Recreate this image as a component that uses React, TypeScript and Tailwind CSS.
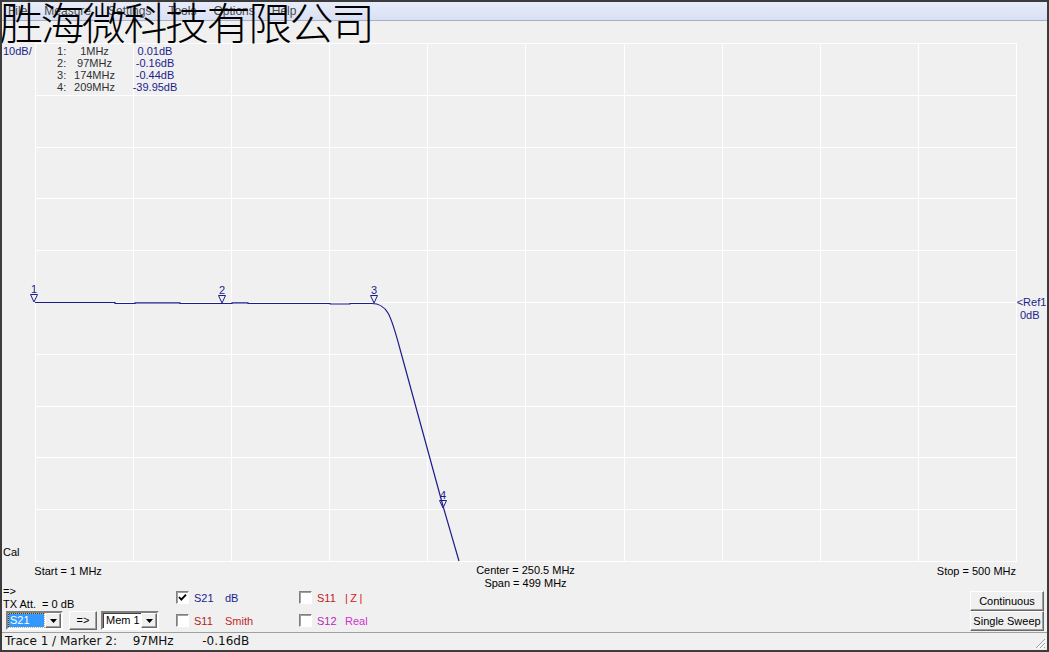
import React from "react";

const navy = "#1d1d8c";
const vLines = [35, 133, 231, 329, 427, 525, 624, 722, 820, 918, 1016];
const hLines = [43, 95, 147, 198, 250, 302, 354, 406, 457, 509, 561];

const markers = [
  { n: "1", x: 34, y: 302, f: "1MHz", v: "0.01dB" },
  { n: "2", x: 222, y: 303, f: "97MHz", v: "-0.16dB" },
  { n: "3", x: 374, y: 303, f: "174MHz", v: "-0.44dB" },
  { n: "4", x: 443, y: 508, f: "209MHz", v: "-39.95dB" },
];

const trace =
  "M35,302.5 H115 V303.5 H135 V302.8 H180 V303.5 H232 V302.8 H248 V303.5 H330 V304 H350 V303.5 H372 C378,303.5 383,305 388,313 C392,320 396,334 400,349 L443,506 L459,561";

function Plot() {
  return (
    <div className="relative h-[564px] shrink-0">
      <svg className="absolute left-0 top-0" width="1045" height="564" viewBox="2 21 1045 564">
        <g stroke="#ffffff" strokeWidth="1" shapeRendering="crispEdges">
          {vLines.map((x) => (
            <line key={"v" + x} x1={x + 0.5} y1={43} x2={x + 0.5} y2={562} />
          ))}
          {hLines.map((y) => (
            <line key={"h" + y} x1={35} y1={y + 0.5} x2={1017} y2={y + 0.5} />
          ))}
        </g>
        <path d={trace} fill="none" stroke={navy} strokeWidth="1.2" />
        {markers.map((m) => (
          <g key={m.n}>
            <polygon
              points={`${m.x - 3.5},${m.y - 7.5} ${m.x + 3.5},${m.y - 7.5} ${m.x},${m.y}`}
              fill="none"
              stroke={navy}
              strokeWidth="1"
            />
            <text
              x={m.x}
              y={m.y - 9.5}
              textAnchor="middle"
              fontFamily="'Liberation Sans', Arial, sans-serif"
              fontSize="11"
              fill={navy}
            >
              {m.n}
            </text>
          </g>
        ))}
      </svg>

      <div className="absolute left-[1px] top-[23.6px] text-[#1d1d8c]">10dB/</div>
      <div className="absolute left-[55px] top-[23.6px] grid grid-cols-[13px_49px_72px] leading-[12.3px]">
        {markers.map((m) => (
          <React.Fragment key={m.n}>
            <span className="text-[#303030]">{m.n}:</span>
            <span className="text-center text-[#303030]">{m.f}</span>
            <span className="text-center text-[#1d1d8c]">{m.v}</span>
          </React.Fragment>
        ))}
      </div>

      <div className="absolute left-[1014.7px] top-[275.2px] text-[#1d1d8c]">&lt;Ref1</div>
      <div className="absolute left-[1018px] top-[287.6px] text-[#1d1d8c]">0dB</div>

      <div className="absolute left-[1px] top-[525.2px]">Cal</div>
      <div className="absolute left-[32.3px] top-[543.6px]">Start = 1 MHz</div>
      <div className="absolute left-[473.5px] top-[543.3px] w-[100px] text-center leading-[13px]">
        <div>Center = 250.5 MHz</div>
        <div>Span = 499 MHz</div>
      </div>
      <div className="absolute right-[31px] top-[543.6px]">Stop = 500 MHz</div>
    </div>
  );
}

function ArrowButton() {
  return (
    <div className="w-[16px] shrink-0 h-full flex items-center justify-center bg-[#f0f0f0] border border-t-white border-l-white border-r-[#696969] border-b-[#696969] shadow-[inset_-1px_-1px_0_#a0a0a0]">
      <svg width="7" height="4" viewBox="0 0 7 4">
        <polygon points="0,0 7,0 3.5,4" fill="#000" />
      </svg>
    </div>
  );
}

function Combo({ value, selected }: { value: string; selected?: boolean }) {
  return (
    <div className="h-[19px] flex items-stretch bg-white border-2 border-t-[#808080] border-l-[#808080] border-b-white border-r-white shadow-[inset_1px_1px_0_#404040]">
      <div className="flex-1 min-w-0 flex items-center pl-[1px] whitespace-nowrap overflow-hidden">
        {selected ? (
          <div className="h-[13px] w-[35px] flex items-center pl-[1px] bg-[#3399ff] text-white outline outline-dotted outline-1 outline-[#c8b070]">
            {value}
          </div>
        ) : (
          <div className="pl-[2px]">{value}</div>
        )}
      </div>
      <ArrowButton />
    </div>
  );
}

function Check({ checked }: { checked?: boolean }) {
  return (
    <div className="w-[13px] h-[13px] shrink-0 bg-white border border-t-[#808080] border-l-[#808080] border-b-white border-r-white shadow-[inset_1px_1px_0_#a0a0a0]">
      {checked && (
        <svg width="11" height="11" viewBox="0 0 11 11">
          <polyline points="2,5 4.3,7.6 9,2.6" fill="none" stroke="#000" strokeWidth="1.8" />
        </svg>
      )}
    </div>
  );
}

function CheckRow({
  checked,
  a,
  b,
  ca,
  cb,
  wa,
}: {
  checked?: boolean;
  a: string;
  b: string;
  ca: string;
  cb: string;
  wa: string;
}) {
  return (
    <div className="flex items-start h-[13px]">
      <Check checked={checked} />
      <span className={`ml-[5px] mt-[1px] leading-[13px] ${wa} ${ca}`}>{a}</span>
      <span className={`mt-[1px] leading-[13px] ${cb}`}>{b}</span>
    </div>
  );
}

function Button({ label }: { label: string }) {
  return (
    <div className="w-[74px] h-[20px] flex items-center justify-center bg-[#f0f0f0] border border-t-white border-l-white border-r-[#696969] border-b-[#696969] shadow-[inset_-1px_-1px_0_#a0a0a0]">
      {label}
    </div>
  );
}

function Controls() {
  return (
    <div className="h-[47px] shrink-0 flex items-start">
      <div className="w-[157px] pl-[1px] flex flex-col">
        <div className="h-[13px] leading-[13px]">=&gt;</div>
        <div className="h-[13px] leading-[13px] whitespace-pre">TX Att.  = 0 dB</div>
        <div className="ml-[3px] flex gap-[6px]">
          <div className="w-[57px] shrink-0">
            <Combo value="S21" selected />
          </div>
          <div className="w-[28px] h-[19px] shrink-0 flex items-center justify-center bg-[#f0f0f0] border border-t-white border-l-white border-r-[#696969] border-b-[#696969] shadow-[inset_-1px_-1px_0_#a0a0a0]">
            =&gt;
          </div>
          <div className="w-[58px] shrink-0 -ml-[2px]">
            <Combo value="Mem 1" />
          </div>
        </div>
      </div>

      <div className="ml-[17px] pt-[6px] w-[123px] flex flex-col gap-[10px]">
        <CheckRow checked a="S21" b="dB" ca="text-[#1d1d8c]" cb="text-[#1d1d8c]" wa="w-[31px]" />
        <CheckRow a="S11" b="Smith" ca="text-[#b01c1c]" cb="text-[#c02828]" wa="w-[31px]" />
      </div>
      <div className="pt-[6px] flex flex-col gap-[10px]">
        <CheckRow a="S11" b="|Z|" ca="text-[#c02020]" cb="text-[#d42020] tracking-[2.5px]" wa="w-[28px]" />
        <CheckRow a="S12" b="Real" ca="text-[#b828b8]" cb="text-[#d030d0]" wa="w-[28px]" />
      </div>

      <div className="ml-auto mr-[3px] pt-[6px] flex flex-col">
        <Button label="Continuous" />
        <Button label="Single Sweep" />
      </div>
    </div>
  );
}

function StatusBar() {
  return (
    <div className="relative h-[18px] shrink-0 flex items-center border-t border-[#a0a0a0] pl-[3px] font-['DejaVu_Sans',sans-serif] text-[12px] leading-[17px] text-[#111]">
      <span className="w-[127.7px]">Trace 1 / Marker 2:</span>
      <span className="w-[69.6px]">97MHz</span>
      <span>-0.16dB</span>
      <svg className="absolute right-[1px] bottom-[1px]" width="12" height="12" viewBox="0 0 12 12">
        <g stroke="#a0a0a0" strokeWidth="1">
          <line x1="11" y1="2" x2="2" y2="11" />
          <line x1="11" y1="6" x2="6" y2="11" />
          <line x1="11" y1="10" x2="10" y2="11" />
        </g>
        <g stroke="#ffffff" strokeWidth="1">
          <line x1="12" y1="3" x2="3" y2="12" />
          <line x1="12" y1="7" x2="7" y2="12" />
        </g>
      </svg>
    </div>
  );
}

export default function App() {
  return (
    <div className="relative w-[1049px] h-[652px] box-border border-2 border-[#3c3c3c] bg-[#f0f0f0] flex flex-col overflow-hidden font-['Liberation_Sans',Arial,sans-serif] text-[11px] leading-[12.3px] text-black">
      <div className="h-[19px] shrink-0 flex items-center gap-[17px] pl-[6px] border-b border-[#a9b0c6] bg-linear-to-b from-[#e8ecf9] to-[#d9e0f4] text-[12px] text-[#4a4a4a]">
        <span>File</span>
        <span>Measure</span>
        <span>Settings</span>
        <span>Tools</span>
        <span>Options</span>
        <span>Help</span>
      </div>
      <Plot />
      <Controls />
      <StatusBar />
      <div className="absolute left-[-3px] top-[-3px] whitespace-nowrap font-['Noto_Sans_CJK_SC',sans-serif] font-light text-[44px] leading-[44px] tracking-[-2.5px] text-black">
        胜海微科技有限公司
      </div>
    </div>
  );
}
